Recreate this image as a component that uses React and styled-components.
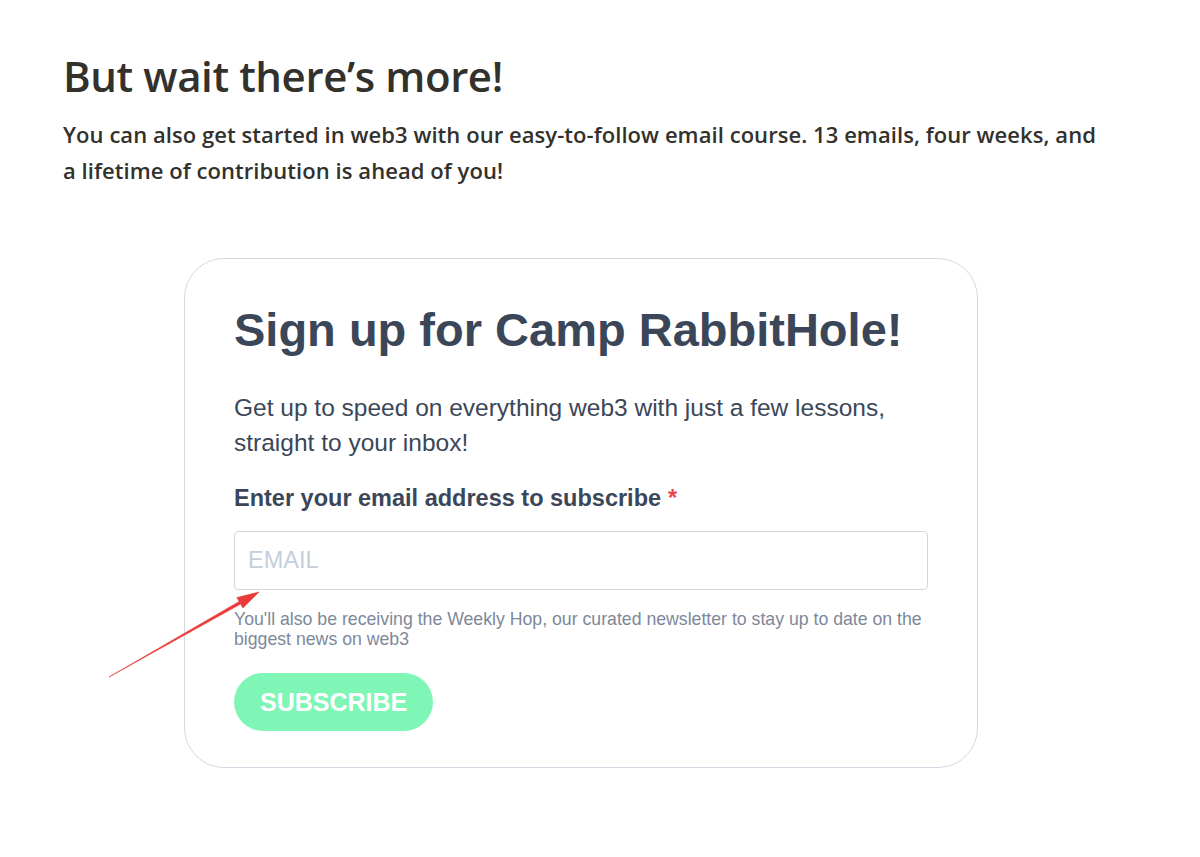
import React from "react";
import styled, { createGlobalStyle } from "styled-components";

const Global = createGlobalStyle`
  html, body { margin: 0; padding: 0; background: #ffffff; }
  * { box-sizing: border-box; }
`;

const Page = styled.main`
  width: 1036px;
  margin-left: 63px;
  padding-top: 47px;
  padding-bottom: 88px;
`;

const Heading = styled.h2`
  margin: 0;
  font-family: "Open Sans", "Noto Sans", sans-serif;
  font-weight: 600;
  font-size: 42px;
  line-height: 58px;
  color: #33312c;
  letter-spacing: -0.4px;
`;

const Lead = styled.p`
  margin: 11px 0 0;
  font-family: "Open Sans", "Noto Sans", sans-serif;
  font-weight: 600;
  font-size: 22px;
  line-height: 36px;
  color: #33312c;
  letter-spacing: 0.06px;
`;

const Card = styled.section`
  position: relative;
  width: 794px;
  margin: 70px auto 0;
  padding: 43px 49px 36px;
  border: 1px solid #d3d9e2;
  border-radius: 40px;
  font-family: "Liberation Sans", Arial, sans-serif;
`;

const CardTitle = styled.h3`
  margin: 0;
  font-size: 47px;
  font-weight: 700;
  line-height: 56px;
  color: #3b4758;
`;

const CardText = styled.p`
  margin: 32px 0 0;
  font-size: 24.5px;
  line-height: 35px;
  color: #3b4758;
`;

const Label = styled.label`
  display: block;
  margin-top: 23px;
  font-size: 23.5px;
  font-weight: 700;
  line-height: 30px;
  color: #3b4758;
`;

const Required = styled.span`
  color: #e5484d;
  margin-left: 7px;
`;

const EmailInput = styled.input`
  display: block;
  width: 100%;
  height: 59px;
  margin-top: 18px;
  padding: 0 13px;
  border: 1px solid #cfd6e0;
  border-radius: 4px;
  font-family: "Liberation Sans", Arial, sans-serif;
  font-size: 23.5px;
  color: #3b4758;
  outline: none;
  &::placeholder { color: #c5cedb; }
`;

const Helper = styled.p`
  margin: 19px 0 0;
  font-size: 17.7px;
  line-height: 20px;
  color: #7d889a;
`;

const SubscribeButton = styled.button`
  display: block;
  margin-top: 24px;
  height: 58px;
  padding: 0 26px;
  border: none;
  border-radius: 29px;
  background: #80f6b6;
  color: #ffffff;
  font-family: "Liberation Sans", Arial, sans-serif;
  font-size: 25px;
  font-weight: 700;
  cursor: pointer;
`;

const Arrow = styled.svg`
  position: absolute;
  left: -80px;
  top: 326px;
  overflow: visible;
  pointer-events: none;
`;

export default function App() {
  return (
    <>
      <Global />
      <Page>
        <Heading>But wait there’s more!</Heading>
        <Lead>
          You can also get started in web3 with our easy-to-follow email course. 13 emails, four weeks, and
          <br />
          a lifetime of contribution is ahead of you!
        </Lead>
        <Card>
          <CardTitle>Sign up for Camp RabbitHole!</CardTitle>
          <CardText>
            Get up to speed on everything web3 with just a few lessons,
            <br />
            straight to your inbox!
          </CardText>
          <Label htmlFor="email">
            Enter your email address to subscribe<Required>*</Required>
          </Label>
          <EmailInput id="email" type="email" placeholder="EMAIL" />
          <Helper>
            You'll also be receiving the Weekly Hop, our curated newsletter to stay up to date on the biggest news on web3
          </Helper>
          <SubscribeButton type="button">SUBSCRIBE</SubscribeButton>
          <Arrow width="160" height="100" viewBox="0 0 160 100">
            <path
              d="M4 92 L134.2 16.5 L131.9 12.6 L154 7 L137.9 23 L135.6 19.1 Z"
              fill="#ea3b3b"
              stroke="#ea3b3b"
              strokeWidth="0.6"
              strokeLinejoin="round"
            />
          </Arrow>
        </Card>
      </Page>
    </>
  );
}
